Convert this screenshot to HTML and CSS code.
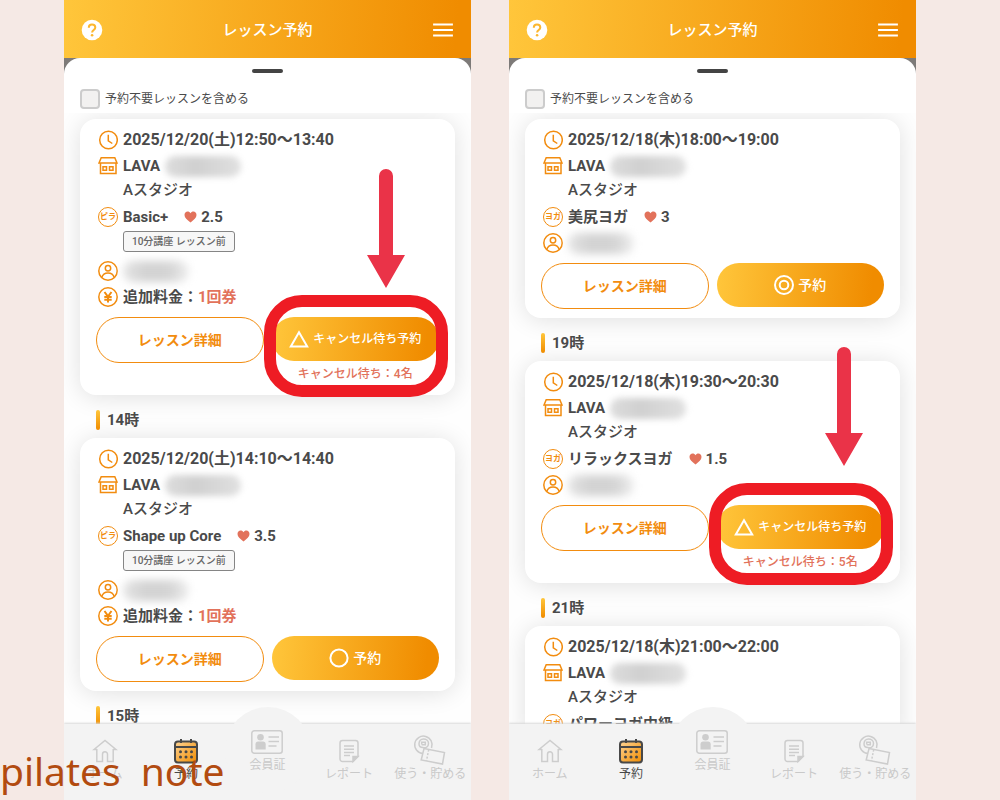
FILE: index.html
```html
<!DOCTYPE html>
<html lang="ja">
<head>
<meta charset="utf-8">
<meta name="viewport" content="width=device-width, initial-scale=1">
<title>レッスン予約</title>
<link rel="stylesheet" href="styles.css">
</head>
<body>
<svg class="sprite" aria-hidden="true">
  <symbol id="clock" viewBox="0 0 20 20"><circle cx="10.500" cy="10" r="8.800"/><path d="M10.300 4.800v6l4 2.700"/></symbol>
  <symbol id="store" viewBox="0 0 20 20"><path d="M3.200 1.800h13.600l2.200 5.200H1zM2.500 7v10.500h15.500V7M5 10.800h3.500v3.400H5zM11.500 10.800H15v3.400h-3.500z"/></symbol>
  <symbol id="person" viewBox="0 0 20 20"><circle cx="10" cy="10" r="9.200"/><circle cx="10" cy="7.200" r="2.700"/><path d="M3.800 16.500c.8-3 3-4.600 6.200-4.600s5.400 1.600 6.200 4.600"/></symbol>
  <symbol id="yen" viewBox="0 0 20 20"><circle cx="10" cy="10" r="9.200"/><path stroke-width="2" d="M6.500 5l3.500 4.800L13.500 5M10 9.800v5.700M6.300 10h7.400M6.300 12.800h7.400"/></symbol>
  <symbol id="heart" viewBox="0 0 13 12"><path d="M6.500 11.500C3 8.600.5 6.500.5 3.900.5 2 1.900.6 3.600.6c1.200 0 2.300.6 2.900 1.600C7.100 1.200 8.200.6 9.400.6c1.700 0 3.100 1.400 3.100 3.300 0 2.600-2.500 4.700-6 7.600z"/></symbol>
  <symbol id="triangle" viewBox="0 0 20 18"><path d="M10 2.200L18.200 16.500H1.800z"/></symbol>
  <symbol id="circle" viewBox="0 0 20 20"><circle cx="10" cy="10" r="8.600"/></symbol>
  <symbol id="double" viewBox="0 0 20 20"><circle cx="10" cy="10" r="9"/><circle cx="10" cy="10" r="4.300"/></symbol>
  <symbol id="help" viewBox="0 0 22 22"><circle cx="11" cy="11" r="10.300" fill="#fff"/><path d="M7.800 8.700c0-2 1.400-3.200 3.200-3.200s3.300 1.200 3.300 3c0 2.400-3.200 2.600-3.200 5" fill="none" stroke="#fcb72f" stroke-width="2"/><circle cx="11.100" cy="16.300" r="1.300" fill="#fcb72f"/></symbol>
  <symbol id="menu" viewBox="0 0 20 14"><path d="M1 2h18M1 7h18M1 12h18"/></symbol>
  <symbol id="home" viewBox="0 0 26 26"><path d="M5 11.500H2L13 2.500l11 9h-3M4.800 11V23.500h5.700v-7.200a2.500 2.500 0 0 1 5 0v7.200h5.700V11"/></symbol>
  <symbol id="calendar" viewBox="0 0 26 26"><rect x="2" y="3.500" width="22" height="21" rx="3" fill="url(#amber)" stroke="#484848" stroke-width="2"/><path d="M2 9h22M8 1v4M18 1v4" stroke="#484848" stroke-width="2"/><g fill="#484848" stroke="none"><circle cx="7.500" cy="13.700" r="1.500"/><circle cx="13" cy="13.700" r="1.500"/><circle cx="18.500" cy="13.700" r="1.500"/><circle cx="7.500" cy="19" r="1.500"/><circle cx="13" cy="19" r="1.500"/><circle cx="18.500" cy="19" r="1.500"/></g></symbol>
  <symbol id="card" viewBox="0 0 34 26"><rect x="1.800" y="1.800" width="30.400" height="22.400" rx="2.500"/><g fill="#cdcdcd" stroke="none"><circle cx="10.500" cy="8.300" r="3.300"/><path d="M5.500 20.500v-5.300c0-1.600 1-2.600 2.600-2.600h5c1.600 0 2.600 1 2.600 2.600v5.300z"/></g><path d="M18.500 8H29M18.500 12.500H29M18.500 17h8"/></symbol>
  <symbol id="report" viewBox="0 0 26 26"><path d="M6.500 2.500h13a2.500 2.500 0 0 1 2.500 2.500v13.500l-5 5H6.500A2.500 2.500 0 0 1 4 21V5a2.500 2.500 0 0 1 2.500-2.500z"/><path d="M8 8h10M8 11.200h10M8 14.400h10M8 17.600h6"/><path d="M22 18.500h-5v5z" fill="#cdcdcd"/></symbol>
  <symbol id="points" viewBox="0 0 34 34"><path d="M18.500 14A8.700 8.700 0 1 0 10 19.500M10 13.500c3 1 5.500-1 5.500-4C15.500 6.500 13 5 10.500 5S6 7 6 10c0 2 1.500 3.500 4 3.500M8.700 10.500V8.300h3.600v2.500h-3.600"/><path d="M11 14.500l20.500 4-2 11.500-21.300-4z"/><path d="M15.700 15.700l-2.200 11" stroke-dasharray="2 1.500"/></symbol>
  <symbol id="arrow" viewBox="0 0 38 119"><path d="M12 7a7 7 0 0 1 14 0v79h12L19 119 0 86h12z" fill="#ea3348"/></symbol>
  <linearGradient id="amber" x1="0" y1="0" x2="1" y2="1"><stop offset="0" stop-color="#ffd494"/><stop offset="1" stop-color="#f08c00"/></linearGradient>
</svg>

<main class="stage">
  <section class="phone">
    <header class="bar">
      <button class="bar-button" aria-label="ヘルプ"><svg class="help"><use href="#help"/></svg></button>
      <h1 class="title">レッスン予約</h1>
      <button class="bar-button" aria-label="メニュー"><svg class="menu"><use href="#menu"/></svg></button>
    </header>
    <div class="backdrop"><div class="sheet">
      <span class="handle"></span>
      <label class="filter"><input class="check" type="checkbox">予約不要レッスンを含める</label>
    </div></div>
    <div class="list">
      <article class="lesson">
        <div class="row date"><svg class="icon"><use href="#clock"/></svg>2025/12/20(土)12:50〜13:40</div>
        <div class="row"><svg class="icon"><use href="#store"/></svg>LAVA<span class="mask"></span></div>
        <div class="studio">Aスタジオ</div>
        <div class="row kind"><span class="badge">ピラ</span>Basic+<span class="level"><svg class="heart"><use href="#heart"/></svg>2.5</span></div>
        <div class="tag">10分講座 レッスン前</div>
        <div class="row"><svg class="icon"><use href="#person"/></svg><span class="mask mask-name"></span></div>
        <div class="row"><svg class="icon"><use href="#yen"/></svg><span>追加料金：<span class="accent">1回券</span></span></div>
        <div class="actions">
          <button class="detail">レッスン詳細</button>
          <div class="booking waiting">
            <button class="book wait"><svg class="mark"><use href="#triangle"/></svg>キャンセル待ち予約</button>
            <p class="queue">キャンセル待ち：4名</p>
            <span class="ring"></span>
            <svg class="arrow"><use href="#arrow"/></svg>
          </div>
        </div>
      </article>
      <h2 class="hour">14時</h2>
      <article class="lesson">
        <div class="row date"><svg class="icon"><use href="#clock"/></svg>2025/12/20(土)14:10〜14:40</div>
        <div class="row"><svg class="icon"><use href="#store"/></svg>LAVA<span class="mask"></span></div>
        <div class="studio">Aスタジオ</div>
        <div class="row kind"><span class="badge">ピラ</span>Shape up Core<span class="level"><svg class="heart"><use href="#heart"/></svg>3.5</span></div>
        <div class="tag">10分講座 レッスン前</div>
        <div class="row"><svg class="icon"><use href="#person"/></svg><span class="mask mask-name"></span></div>
        <div class="row"><svg class="icon"><use href="#yen"/></svg><span>追加料金：<span class="accent">1回券</span></span></div>
        <div class="actions">
          <button class="detail">レッスン詳細</button>
          <div class="booking"><button class="book"><svg class="mark"><use href="#circle"/></svg>予約</button></div>
        </div>
      </article>
      <h2 class="hour">15時</h2>
    </div>
    <nav class="tabs">
      <a class="tab" href="#"><svg class="tab-icon"><use href="#home"/></svg>ホーム</a>
      <a class="tab current" href="#"><svg class="tab-icon"><use href="#calendar"/></svg>予約</a>
      <a class="tab member" href="#"><svg class="tab-icon wide"><use href="#card"/></svg>会員証</a>
      <a class="tab" href="#"><svg class="tab-icon"><use href="#report"/></svg>レポート</a>
      <a class="tab" href="#"><svg class="tab-icon large"><use href="#points"/></svg>使う・貯める</a>
    </nav>
  </section>

  <section class="phone">
    <header class="bar">
      <button class="bar-button" aria-label="ヘルプ"><svg class="help"><use href="#help"/></svg></button>
      <h1 class="title">レッスン予約</h1>
      <button class="bar-button" aria-label="メニュー"><svg class="menu"><use href="#menu"/></svg></button>
    </header>
    <div class="backdrop"><div class="sheet">
      <span class="handle"></span>
      <label class="filter"><input class="check" type="checkbox">予約不要レッスンを含める</label>
    </div></div>
    <div class="list">
      <article class="lesson">
        <div class="row date"><svg class="icon"><use href="#clock"/></svg>2025/12/18(木)18:00〜19:00</div>
        <div class="row"><svg class="icon"><use href="#store"/></svg>LAVA<span class="mask"></span></div>
        <div class="studio">Aスタジオ</div>
        <div class="row kind"><span class="badge">ヨガ</span>美尻ヨガ<span class="level"><svg class="heart"><use href="#heart"/></svg>3</span></div>
        <div class="row"><svg class="icon"><use href="#person"/></svg><span class="mask mask-name"></span></div>
        <div class="actions">
          <button class="detail">レッスン詳細</button>
          <div class="booking"><button class="book"><svg class="mark"><use href="#double"/></svg>予約</button></div>
        </div>
      </article>
      <h2 class="hour">19時</h2>
      <article class="lesson">
        <div class="row date"><svg class="icon"><use href="#clock"/></svg>2025/12/18(木)19:30〜20:30</div>
        <div class="row"><svg class="icon"><use href="#store"/></svg>LAVA<span class="mask"></span></div>
        <div class="studio">Aスタジオ</div>
        <div class="row kind"><span class="badge">ヨガ</span>リラックスヨガ<span class="level"><svg class="heart"><use href="#heart"/></svg>1.5</span></div>
        <div class="row"><svg class="icon"><use href="#person"/></svg><span class="mask mask-name"></span></div>
        <div class="actions">
          <button class="detail">レッスン詳細</button>
          <div class="booking waiting">
            <button class="book wait"><svg class="mark"><use href="#triangle"/></svg>キャンセル待ち予約</button>
            <p class="queue">キャンセル待ち：5名</p>
            <span class="ring"></span>
            <svg class="arrow arrow-right"><use href="#arrow"/></svg>
          </div>
        </div>
      </article>
      <h2 class="hour">21時</h2>
      <article class="lesson">
        <div class="row date"><svg class="icon"><use href="#clock"/></svg>2025/12/18(木)21:00〜22:00</div>
        <div class="row"><svg class="icon"><use href="#store"/></svg>LAVA<span class="mask"></span></div>
        <div class="studio">Aスタジオ</div>
        <div class="row kind"><span class="badge">ヨガ</span>パワーヨガ中級</div>
      </article>
    </div>
    <nav class="tabs">
      <a class="tab" href="#"><svg class="tab-icon"><use href="#home"/></svg>ホーム</a>
      <a class="tab current" href="#"><svg class="tab-icon"><use href="#calendar"/></svg>予約</a>
      <a class="tab member" href="#"><svg class="tab-icon wide"><use href="#card"/></svg>会員証</a>
      <a class="tab" href="#"><svg class="tab-icon"><use href="#report"/></svg>レポート</a>
      <a class="tab" href="#"><svg class="tab-icon large"><use href="#points"/></svg>使う・貯める</a>
    </nav>
  </section>
  <p class="credit"><span>pilates</span><span>note</span></p>
</main>
</body>
</html>
```
FILE: styles.css
```css
* { box-sizing: border-box; }

body {
  margin: 0;
  background: #f5e9e5;
  color: #4a4a4a;
  font: 700 15px/20px Roboto, "Noto Sans CJK JP", sans-serif;
}

h1, h2, p { margin: 0; font: inherit; }

button {
  margin: 0;
  padding: 0;
  border: 0;
  background: none;
  font: inherit;
}

.sprite {
  position: absolute;
  width: 0;
  height: 0;
}

.stage {
  position: relative;
  display: grid;
  grid-template-columns: 1fr 1fr;
  gap: 38px;
  height: 100vh;
  padding: 0 84px 0 64px;
}

.phone {
  display: flex;
  flex-direction: column;
  min-width: 0;
  min-height: 0;
  overflow: hidden;
  background: #fff;
}

.bar {
  display: flex;
  flex: none;
  align-items: center;
  justify-content: space-between;
  height: 58px;
  padding: 2px 17px 0;
  background: linear-gradient(95deg, #ffc63b, #f08c00 96%);
  color: #fff;
}

.title { font-weight: 500; }
.bar-button { display: flex; }
.help { width: 22px; height: 22px; }
.menu { width: 22px; height: 16px; stroke: #fff; stroke-width: 2; }

.backdrop { flex: none; background: #7d7a78; }

.sheet {
  display: flex;
  flex-direction: column;
  padding: 11px 16px 4px;
  border-radius: 16px 16px 0 0;
  background: #fff;
}

.handle {
  align-self: center;
  width: 31px;
  height: 4px;
  border-radius: 2px;
  background: #444;
}

.filter {
  display: flex;
  align-items: center;
  gap: 5px;
  margin-top: 16px;
  font-size: 12px;
  font-weight: 400;
}

.check {
  width: 20px;
  height: 20px;
  margin: 0;
  appearance: none;
  border: 2px solid #ccc;
  border-radius: 4px;
  background: #f2f1f0;
}

.list {
  flex: 1;
  min-height: 0;
  padding: 6px 16px 0;
  overflow: hidden;
  background: #fefefe;
}

.lesson {
  padding: 8px 16px 9px;
  border-radius: 16px;
  background: #fff;
  box-shadow: 0 2px 24px rgba(0, 0, 0, 0.12);
}

.row {
  display: flex;
  align-items: center;
  gap: 5px;
  height: 26px;
  padding-left: 2px;
}

.date { font-size: 16px; }
.kind { margin-top: 3px; }

.icon {
  flex: none;
  width: 20px;
  height: 20px;
  fill: none;
  stroke: #f28c0f;
  stroke-width: 1.5;
}

.studio {
  height: 22px;
  padding-left: 27px;
  font-weight: 500;
  line-height: 22px;
}

.badge {
  flex: none;
  width: 20px;
  border: 1px solid #f28c0f;
  border-radius: 10px;
  color: #f28c0f;
  font-size: 8px;
  line-height: 18px;
  text-align: center;
}

.level {
  display: flex;
  align-items: center;
  gap: 4px;
  margin-left: 11px;
}

.heart { width: 13px; height: 12px; fill: #e2725b; }

.mask {
  width: 76px;
  height: 21px;
  border-radius: 10px;
  background: linear-gradient(90deg, #ddd, #d0d0d0 40%, #e0e0e0);
  filter: blur(3px);
}

.mask-name {
  width: 66px;
  background: linear-gradient(90deg, #e4e4e4, #d2d2d2 35%, #d4d4d4 70%, #eee);
  filter: blur(4px);
}

.tag {
  width: fit-content;
  margin: 1px 0 6px 27px;
  padding: 0 8px;
  border: 1px solid #858585;
  border-radius: 3px;
  background: #f7f7f7;
  color: #666;
  font-size: 10px;
  font-weight: 500;
  line-height: 19px;
}

.accent { color: #e2725b; }

.actions {
  display: grid;
  grid-template-columns: 1fr 1fr;
  align-items: start;
  gap: 8px;
  margin-top: 7px;
}

.detail {
  height: 46px;
  border: 1px solid #f28c0f;
  border-radius: 23px;
  color: #f28c0f;
  font-size: 14px;
}

.booking { position: relative; }
.waiting { height: 69px; }

.book {
  display: flex;
  align-items: center;
  justify-content: center;
  gap: 4px;
  width: 100%;
  height: 44px;
  border-radius: 22px;
  background: linear-gradient(95deg, #ffc63b, #f08c00 92%);
  color: #fff;
  font-size: 14px;
  font-weight: 500;
}

.wait { font-size: 12px; }

.mark {
  width: 20px;
  height: 20px;
  fill: none;
  stroke: #fff;
  stroke-width: 2;
}

.queue {
  padding-top: 3px;
  color: #e2725b;
  font-size: 12px;
  font-weight: 500;
  text-align: center;
}

.ring {
  position: absolute;
  inset: -22px -9px -11px -8px;
  border: 12px solid #ee1c24;
  border-radius: 38px;
}

.arrow {
  position: absolute;
  bottom: calc(100% + 29px);
  left: 57%;
  width: 38px;
  height: 119px;
}

.arrow-right {
  bottom: calc(100% + 39px);
  left: 65%;
}

.hour {
  display: flex;
  align-items: center;
  gap: 7px;
  margin: 15px 16px 8px;
}

.hour::before {
  width: 4px;
  height: 20px;
  border-radius: 2px;
  background: linear-gradient(#ffc63b, #f08c00);
  content: "";
}

.tabs {
  position: relative;
  display: grid;
  flex: none;
  grid-template-columns: repeat(5, 1fr);
  height: 76px;
  background: #f3f3f3;
  box-shadow: 0 -1px 2px #d8d8d8;
}

.tabs::before {
  position: absolute;
  top: -17px;
  left: calc(50% - 43px);
  width: 86px;
  height: 86px;
  border-radius: 50%;
  background: #f3f3f3;
  content: "";
}

.tab {
  position: relative;
  display: flex;
  flex-direction: column;
  align-items: center;
  justify-content: flex-end;
  padding-bottom: 16px;
  color: #c9c9c9;
  font-size: 12px;
  font-weight: 400;
  line-height: 20px;
  text-decoration: none;
  white-space: nowrap;
}

.current { color: #484848; }
.member { padding-bottom: 25px; }

.tab-icon {
  width: 26px;
  height: 26px;
  fill: none;
  stroke: #cdcdcd;
  stroke-width: 1.5;
}

.wide { width: 34px; }
.large { width: 34px; height: 34px; margin-bottom: -4px; }

.credit {
  position: absolute;
  bottom: 2px;
  left: 0;
  display: flex;
  gap: 20px;
  color: #b24b10;
  font: 400 39px/54px "Noto Sans", sans-serif;
}
```
